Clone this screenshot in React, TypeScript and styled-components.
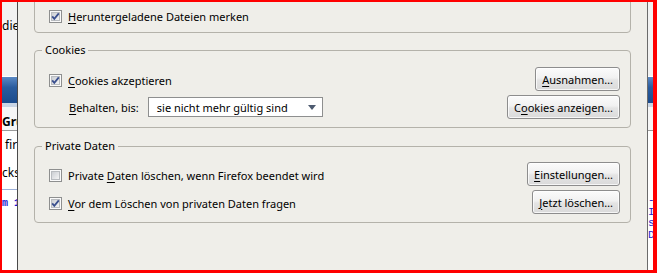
import React from 'react';
import styled, { createGlobalStyle } from 'styled-components';

const GlobalStyle = createGlobalStyle`
  html, body {
    margin: 0;
    padding: 0;
    overflow: hidden;
  }
  body {
    font-family: "Noto Sans", "DejaVu Sans", sans-serif;
    font-size: 11px;
    color: #000;
  }
`;

const DIALOG_BG = '#efeee9';

const Frame = styled.div`
  width: 657px;
  height: 273px;
  box-sizing: border-box;
  border: 2px solid #ff0000;
  border-right-width: 4px;
  border-bottom-width: 3px;
  display: flex;
  overflow: hidden;
  background: #fff;
`;

// --- browser window behind the dialog ---

const Strip = styled.div<{ $w: number }>`
  width: ${(p) => p.$w}px;
  flex-shrink: 0;
  display: flex;
  flex-direction: column;
  overflow: hidden;
  background: #fff;
  white-space: nowrap;
`;

const StripTop = styled.div`
  height: 74px;
  background: #f2f2f2;
  box-sizing: border-box;
  padding-top: 16px;
  font-size: 12px;
  line-height: 16px;
`;

const StripBlue = styled.div`
  height: 26px;
  border-top: 1px solid #fff;
  background: linear-gradient(#5a88c4, #2a5c9e 40%, #1b4b8c);
`;

const StripHead = styled.div`
  height: 23px;
  border-top: 4px solid #c9d5e5;
  border-bottom: 1px solid #9a9a9a;
  background: #f6f6f6;
  font-weight: bold;
  font-size: 12px;
  line-height: 30px;
`;

const StripLine = styled.div<{ $blue?: boolean; $mono?: boolean }>`
  height: 28px;
  line-height: 28px;
  font-size: ${(p) => (p.$mono ? 10 : 12)}px;
  font-family: ${(p) => (p.$mono ? '"Liberation Mono", monospace' : 'inherit')};
  font-weight: ${(p) => (p.$mono ? 'bold' : 'normal')};
  color: ${(p) => (p.$blue ? '#1a1ad0' : '#000')};
`;

const StripRule = styled.div`
  height: 1px;
  margin-top: 2px;
  background: #9db0d8;
`;

const StripCode = styled.div`
  margin-top: 2px;
  font-family: "Liberation Mono", monospace;
  font-size: 11px;
  line-height: 11.5px;
  color: #2222cc;
`;

// --- dialog ---

const Dialog = styled.div`
  flex: 1;
  min-width: 0;
  background: ${DIALOG_BG};
  border-left: 1px solid #4a4a4a;
  border-right: 1px solid #6b6b6b;
  padding: 0 16px;
  display: flex;
  flex-direction: column;
`;

const Group = styled.section<{ $mt: number; $pb: number }>`
  margin-top: ${(p) => p.$mt}px;
  border: 1px solid #b4b2aa;
  border-radius: 4px;
  padding: 0 10px ${(p) => p.$pb}px 14px;
  display: flex;
  flex-direction: column;
`;

const Legend = styled.div`
  width: fit-content;
  margin: -8px 0 0 -7px;
  padding: 0 3px;
  line-height: 14px;
  background: ${DIALOG_BG};
`;

const Rows = styled.div<{ $mt: number }>`
  margin-top: ${(p) => p.$mt}px;
  display: grid;
  grid-template-columns: 1fr auto;
  grid-auto-rows: 24px;
  row-gap: 4px;
  align-items: center;
`;

const CheckRow = styled.label`
  display: flex;
  align-items: center;
  gap: 6px;
  padding-top: 2px;
`;

const FieldRow = styled.div`
  display: flex;
  align-items: center;
  gap: 9px;
  padding-left: 20px;
`;

const Key = styled.span`
  text-decoration: underline;
  text-underline-offset: 2px;
`;

const Button = styled.button`
  justify-self: end;
  height: 24px;
  box-sizing: border-box;
  padding: 0 6px;
  font: inherit;
  color: #000;
  border: 1px solid #8d8d8d;
  border-radius: 3px;
  background: linear-gradient(#fbfbfb, #f1f1f1 45%, #e4e4e4 55%, #dadada);
  box-shadow: inset 0 0 0 1px rgba(255, 255, 255, 0.75);
`;

const Select = styled.div`
  width: 175px;
  height: 20px;
  box-sizing: border-box;
  border: 1px solid #8e8f8f;
  background: #fff;
  display: flex;
  align-items: center;
  justify-content: space-between;
  padding: 0 6px 0 8px;
`;

const Check = ({ checked }: { checked?: boolean }) => (
  <svg width="13" height="13" viewBox="0 0 13 13" style={{ flexShrink: 0 }}>
    <defs>
      <linearGradient id="cbInner" x1="0" y1="0" x2="1" y2="1">
        <stop offset="0" stopColor="#c9ccd1" />
        <stop offset="1" stopColor="#f7f7f7" />
      </linearGradient>
    </defs>
    <rect x="0.5" y="0.5" width="12" height="12" fill="#fafafa" stroke="#8e8f8f" />
    <rect x="2.5" y="2.5" width="8" height="8" fill="url(#cbInner)" stroke="#b9bcc0" />
    {checked && (
      <path d="M3.2 6.3 L5.3 8.8 L9.8 3.4" fill="none" stroke="#3a4f8e" strokeWidth="1.8" />
    )}
  </svg>
);

const Arrow = () => (
  <svg width="8" height="5" viewBox="0 0 8 5">
    <path d="M0 0 H8 L4 5 Z" fill="#4e5b70" />
  </svg>
);

const App = () => {
  return (
    <>
      <GlobalStyle />
      <Frame>
        <Strip $w={15}>
          <StripTop>die</StripTop>
          <StripBlue />
          <StripHead>Grü</StripHead>
          <StripLine>&nbsp;fir</StripLine>
          <StripLine>cks</StripLine>
          <StripRule />
          <StripLine $blue $mono>m 1</StripLine>
        </Strip>

        <Dialog>
          <Group $mt={-20} $pb={5}>
            <Rows $mt={20}>
              <CheckRow>
                <Check checked />
                <span>
                  <Key>H</Key>eruntergeladene Dateien merken
                </span>
              </CheckRow>
            </Rows>
          </Group>

          <Group $mt={17} $pb={8}>
            <Legend>Cookies</Legend>
            <Rows $mt={10}>
              <CheckRow>
                <Check checked />
                <span>
                  <Key>C</Key>ookies akzeptieren
                </span>
              </CheckRow>
              <Button>
                <Key>A</Key>usnahmen…
              </Button>
              <FieldRow>
                <span>
                  <Key>B</Key>ehalten, bis:
                </span>
                <Select>
                  <span>sie nicht mehr gültig sind</span>
                  <Arrow />
                </Select>
              </FieldRow>
              <Button>
                C<Key>o</Key>okies anzeigen…
              </Button>
            </Rows>
          </Group>

          <Group $mt={18} $pb={8}>
            <Legend>Private Daten</Legend>
            <Rows $mt={9}>
              <CheckRow>
                <Check />
                <span>
                  Private <Key>D</Key>aten löschen, wenn Firefox beendet wird
                </span>
              </CheckRow>
              <Button>
                <Key>E</Key>instellungen…
              </Button>
              <CheckRow>
                <Check checked />
                <span>
                  <Key>V</Key>or dem Löschen von privaten Daten fragen
                </span>
              </CheckRow>
              <Button>
                <Key>J</Key>etzt löschen…
              </Button>
            </Rows>
          </Group>
        </Dialog>

        <Strip $w={5}>
          <StripTop />
          <StripBlue />
          <StripHead />
          <StripCode style={{ marginTop: 64 }}>
            -<br />I<br />s<br />D
          </StripCode>
        </Strip>
      </Frame>
    </>
  );
};

export default App;
